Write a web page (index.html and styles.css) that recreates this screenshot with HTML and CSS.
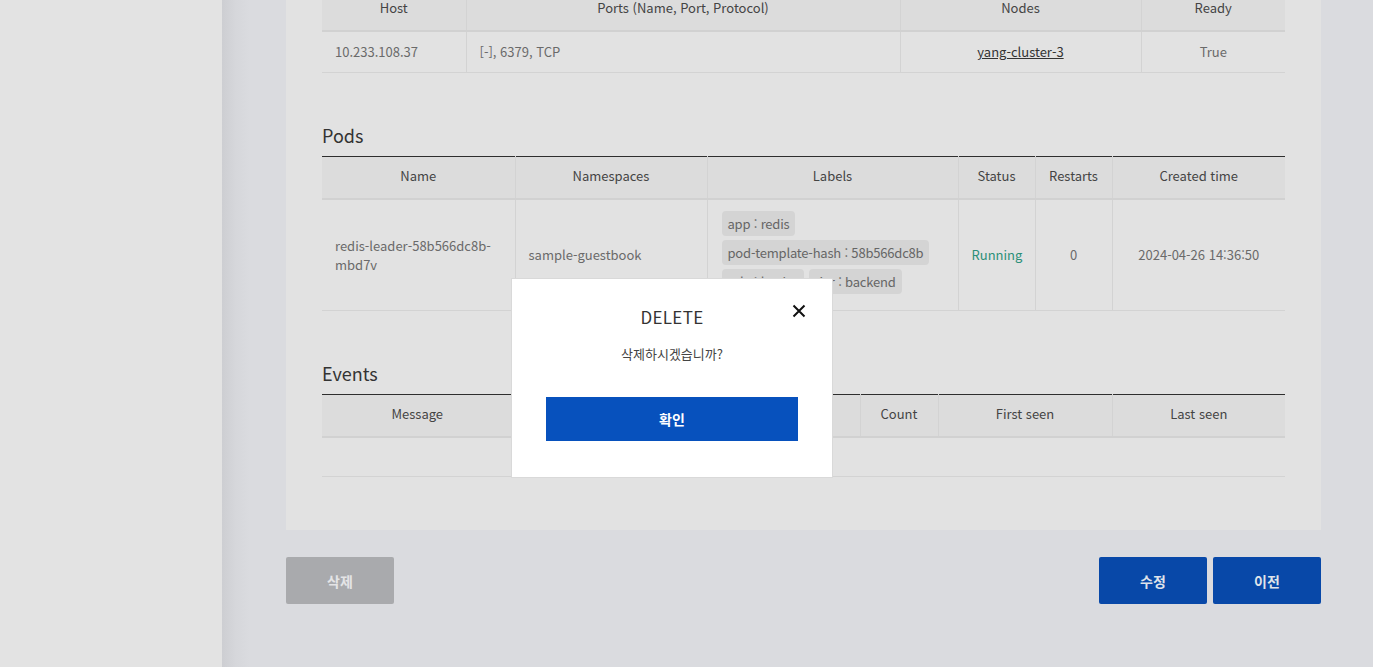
FILE: index.html
```html
<!DOCTYPE html>
<html lang="ko">
<head>
<meta charset="utf-8">
<title>Service detail</title>
<link rel="stylesheet" href="styles.css">
</head>
<body>
<div class="layout">
  <aside class="sidebar"></aside>
  <main class="main">
    <div class="card">
      <table class="tbl tbl-host">
        <colgroup><col style="width:144px"><col style="width:434px"><col style="width:241px"><col></colgroup>
        <thead><tr><th>Host</th><th>Ports (Name, Port, Protocol)</th><th>Nodes</th><th>Ready</th></tr></thead>
        <tbody><tr><td class="l">10.233.108.37</td><td class="l">[-], 6379, TCP</td><td><a class="node" href="#">yang-cluster-3</a></td><td>True</td></tr></tbody>
      </table>

      <h2 class="sec-title">Pods</h2>
      <table class="tbl tbl-pods">
        <colgroup><col style="width:193px"><col style="width:192px"><col style="width:251px"><col style="width:77px"><col style="width:77px"><col></colgroup>
        <thead><tr><th>Name</th><th>Namespaces</th><th>Labels</th><th>Status</th><th>Restarts</th><th>Created time</th></tr></thead>
        <tbody><tr>
          <td class="l">redis-leader-58b566dc8b-mbd7v</td>
          <td class="l">sample-guestbook</td>
          <td class="labels"><div class="tags"><span class="tag">app : redis</span><span class="tag">pod-template-hash : 58b566dc8b</span><span class="tag">role : leader</span><span class="tag">tier : backend</span></div></td>
          <td class="running">Running</td>
          <td>0</td>
          <td>2024-04-26 14:36:50</td>
        </tr></tbody>
      </table>

      <h2 class="sec-title">Events</h2>
      <table class="tbl tbl-events">
        <colgroup><col style="width:191px"><col style="width:174px"><col style="width:173px"><col style="width:78px"><col style="width:174px"><col></colgroup>
        <thead><tr><th>Message</th><th>Reason</th><th>Type</th><th>Count</th><th>First seen</th><th>Last seen</th></tr></thead>
        <tbody><tr class="empty"><td colspan="6"></td></tr></tbody>
      </table>
    </div>
    <div class="actions">
      <button class="btn btn-grey">삭제</button>
      <div class="actions-right">
        <button class="btn btn-blue">수정</button>
        <button class="btn btn-blue">이전</button>
      </div>
    </div>
  </main>
</div>

<div class="modal">
  <button class="modal-close" aria-label="close">
    <svg width="14" height="14" viewBox="0 0 14 14"><path d="M1.5 1.5 L12.5 12.5 M12.5 1.5 L1.5 12.5" stroke="#111" stroke-width="2" fill="none"/></svg>
  </button>
  <div class="modal-title">DELETE</div>
  <div class="modal-msg">삭제하시겠습니까?</div>
  <button class="modal-ok">확인</button>
</div>
</body>
</html>
```

FILE: styles.css
```css
* { box-sizing: border-box; }
html, body { margin: 0; padding: 0; height: 100%; overflow: hidden; }
body {
  font-family: "Noto Sans CJK KR", "Noto Sans", sans-serif;
  font-size: 13px;
  color: #555;
  background: #dadbdf;
}
.layout { display: flex; height: 667px; }
.sidebar { width: 222px; flex: none; background: #e3e3e3; }
.main {
  flex: 1;
  padding: 0 52px 0 64px;
  background: linear-gradient(to right, #cdced2 0px, #d6d7db 14px, #dadbdf 28px, #dadbdf 100%);
}
.card {
  background: #e2e2e2;
  margin-top: -12px;
  padding: 0 36px 53px;
}
.tbl {
  width: 100%;
  border-collapse: collapse;
  table-layout: fixed;
  border-top: 1px solid #2e2e2e;
}
.tbl th {
  height: 42px;
  background: #dcdcdc;
  font-weight: 400;
  color: #444;
  text-align: center;
  border-bottom: 2px solid #d1d1d1;
  border-left: 1px solid #d3d3d3;
  padding: 0 8px 3px;
}
.tbl th:first-child, .tbl td:first-child { border-left: none; }
.tbl td {
  color: #6a6a6a;
  text-align: center;
  border-bottom: 1px solid #d3d3d3;
  border-left: 1px solid #d3d3d3;
  padding: 0 13px;
  line-height: 19px;
}
.tbl td.l { text-align: left; }
.tbl-host td { height: 42px; }
.node { color: #333; text-decoration: underline; }
.sec-title {
  margin: 48px 0 7px;
  font-size: 18px;
  line-height: 28px;
  font-weight: 400;
  color: #333;
}
.tbl-pods td { height: 112px; }
.tbl td.labels { padding: 11px 14px 16px; text-align: left; }
.tags { display: flex; flex-wrap: wrap; gap: 4px 5px; }
.tag {
  display: inline-block;
  background: #d4d4d4;
  border-radius: 4px;
  padding: 0 6px;
  height: 25px;
  line-height: 25px;
  color: #666;
  letter-spacing: -0.2px;
}
.tbl td.running { color: #2b9079; }
.tbl-events .empty td { height: 40px; }
.actions {
  display: flex;
  justify-content: space-between;
  margin-top: 27px;
}
.actions-right { display: flex; gap: 6px; }
.btn {
  width: 108px;
  height: 47px;
  border: none;
  border-radius: 2px;
  font-family: inherit;
  font-size: 14px;
  font-weight: 700;
  cursor: pointer;
}
.btn-grey { background: #a9aaad; color: #e4e4e6; }
.btn-blue { background: #0848a8; color: #dfe3ea; }

.modal {
  position: absolute;
  left: 511px;
  top: 278px;
  width: 322px;
  height: 200px;
  background: #fff;
  border: 1px solid #d9d9d9;
  padding: 0 35px;
  display: flex;
  flex-direction: column;
  align-items: center;
}
.modal-close {
  position: absolute;
  right: 25px;
  top: 24px;
  width: 16px;
  height: 16px;
  border: none;
  background: none;
  padding: 1px;
  cursor: pointer;
  display: flex;
}
.modal-title {
  margin-top: 26px;
  font-size: 17px;
  line-height: 24px;
  color: #333;
  letter-spacing: 0.3px;
}
.modal-msg {
  margin-top: 15px;
  font-size: 13px;
  line-height: 20px;
  color: #444;
}
.modal-ok {
  margin-top: 33px;
  width: 252px;
  height: 44px;
  background: #0751bd;
  color: #fff;
  border: none;
  font-family: inherit;
  font-size: 14px;
  font-weight: 700;
}
```
